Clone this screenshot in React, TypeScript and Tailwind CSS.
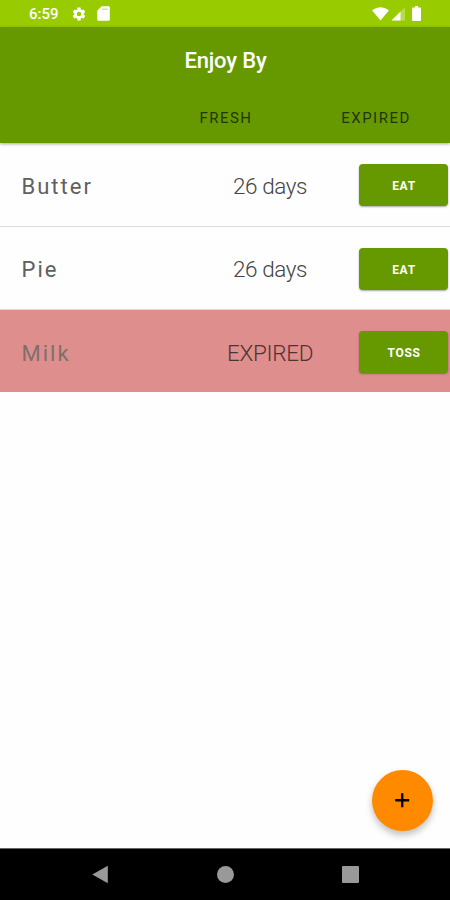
import type { ReactNode } from 'react';

type Item = { name: string; status: string; action: string; expired?: boolean };

const items: Item[] = [
  { name: 'Butter', status: '26 days', action: 'EAT' },
  { name: 'Pie', status: '26 days', action: 'EAT' },
  { name: 'Milk', status: 'EXPIRED', action: 'TOSS', expired: true },
];

function StatusBar() {
  return (
    <div className="flex h-[27px] shrink-0 items-center bg-[#99cc00] pl-[29px] pr-[27px] text-white">
      <span className="w-[42px] pt-[2px] text-[15px] font-medium leading-none">6:59</span>
      <svg className="size-4" viewBox="0 0 24 24" fill="currentColor">
        <path d="M19.14 12.94c.04-.3.06-.61.06-.94 0-.32-.02-.64-.07-.94l2.03-1.58a.49.49 0 0 0 .12-.61l-1.92-3.32a.49.49 0 0 0-.59-.22l-2.39.96c-.5-.38-1.03-.7-1.62-.94l-.36-2.54A.48.48 0 0 0 13.92 2.4h-3.84c-.24 0-.43.17-.47.41l-.36 2.54c-.59.24-1.13.57-1.62.94l-2.39-.96a.48.48 0 0 0-.59.22L2.74 8.87a.48.48 0 0 0 .12.61l2.03 1.58c-.05.3-.09.63-.09.94s.02.64.07.94l-2.03 1.58a.49.49 0 0 0-.12.61l1.92 3.32c.12.22.37.29.59.22l2.39-.96c.5.38 1.03.7 1.62.94l.36 2.54c.05.24.24.41.48.41h3.84c.24 0 .44-.17.47-.41l.36-2.54c.59-.24 1.13-.56 1.62-.94l2.39.96c.22.08.47 0 .59-.22l1.92-3.32a.48.48 0 0 0-.12-.61zM12 15.4a3.4 3.4 0 1 1 0-6.8 3.4 3.4 0 0 1 0 6.8z" />
      </svg>
      <svg className="ml-[10px] h-[15px] w-[13px]" viewBox="0 0 13 15" fill="currentColor">
        <path d="M4.7 .3H11.5Q12.8 .3 12.8 1.6V13.4Q12.8 14.7 11.5 14.7H1.5Q.2 14.7 .2 13.4V4.8Z" />
        <path d="M5 3.2H10.8" stroke="#99cc00" strokeOpacity=".7" />
      </svg>
      <span className="grow" />
      <svg className="h-4 w-[51px]" viewBox="0 0 51 16" fill="currentColor">
        <path d="M0 4.2Q8.5-1.8 17 4.2L8.5 14.5Z" />
        <path d="M19.5 14.5L33 1.5V14.5Z" opacity=".3" />
        <path d="M19.5 14.5L28.5 5.5V14.5Z" />
        <path d="M43 0H46V1.5H48Q49 1.5 49 2.5V14Q49 15 48 15H41Q40 15 40 14V2.5Q40 1.5 41 1.5H43Z" />
      </svg>
    </div>
  );
}

function Header() {
  return (
    <header className="z-10 flex h-[116px] shrink-0 flex-col bg-[#669900] shadow-[0_1px_3px_rgba(0,0,0,0.35)]">
      <h1 className="flex h-[66px] items-center justify-center pl-px text-[22px] font-medium tracking-[-0.15px] text-white">
        Enjoy By
      </h1>
      <div className="grid h-[50px] grid-cols-3 items-center text-center text-[15px] tracking-[1.5px] text-[#213600]">
        <span className="pl-[2px]" />
        <span className="pl-[2px]">FRESH</span>
        <span className="pl-[2px]">EXPIRED</span>
      </div>
    </header>
  );
}

function Row({ name, status, action, expired }: Item) {
  return (
    <li
      className={
        expired
          ? 'flex h-[82px] items-center bg-[#df8e8e]'
          : 'flex h-[83.5px] items-center border-b border-[#dcdcdc]'
      }
    >
      <span
        className={
          expired
            ? 'w-[180px] pl-[21.5px] pt-[4px] text-[22px] tracking-[2px] text-[#7c706d]'
            : 'w-[180px] pl-[21.5px] pt-[4px] text-[22px] tracking-[2px] text-[#606060]'
        }
      >
        {name}
      </span>
      <span
        className={
          expired
            ? 'w-[179px] pl-px pt-[5px] text-center text-[22.5px] font-light tracking-[-0.3px] text-[#4f3333]'
            : 'w-[179px] pl-px pt-[5px] text-center text-[22.5px] font-light tracking-[-0.4px] text-[#444444]'
        }
      >
        {status}
      </span>
      <button className="mt-[2px] h-[42px] w-[89px] rounded-[4px] bg-[#669900] pl-px pt-[2px] text-[12px] font-bold tracking-[0.7px] text-white shadow-[0_1px_2px_rgba(0,0,0,0.35)]">
        {action}
      </button>
    </li>
  );
}

function NavCell({ children }: { children: ReactNode }) {
  return <span className="flex w-[125px] items-center justify-center">{children}</span>;
}

export default function App() {
  return (
    <div className="flex h-[900px] w-[450px] flex-col overflow-hidden bg-[#fefefe] font-[Roboto,sans-serif]">
      <StatusBar />
      <Header />
      <main className="relative grow">
        <ul>
          {items.map((item) => (
            <Row key={item.name} {...item} />
          ))}
        </ul>
        <button
          aria-label="Add"
          className="absolute bottom-[17.5px] right-[17px] flex size-[61px] items-center justify-center rounded-full bg-[#ff8a00] shadow-[0_4px_7px_rgba(0,0,0,0.25)]"
        >
          <svg className="size-[17px]" viewBox="0 0 17 17" stroke="#000" strokeWidth="2.4">
            <path d="M8.2 1.2V15.2M1.2 8.2H15.2" />
          </svg>
        </button>
      </main>
      <nav className="flex h-[52px] shrink-0 justify-center border-t border-[#666666] bg-black text-[#999999]">
        <NavCell>
          <svg className="h-[19px] w-[17px]" viewBox="0 0 17 19" fill="currentColor">
            <path d="M15.8 .7V18.3L.3 9.5Z" />
          </svg>
        </NavCell>
        <NavCell>
          <span className="size-[17px] rounded-full bg-[#999999]" />
        </NavCell>
        <NavCell>
          <span className="size-[17px] rounded-[1px] bg-[#999999]" />
        </NavCell>
      </nav>
    </div>
  );
}
